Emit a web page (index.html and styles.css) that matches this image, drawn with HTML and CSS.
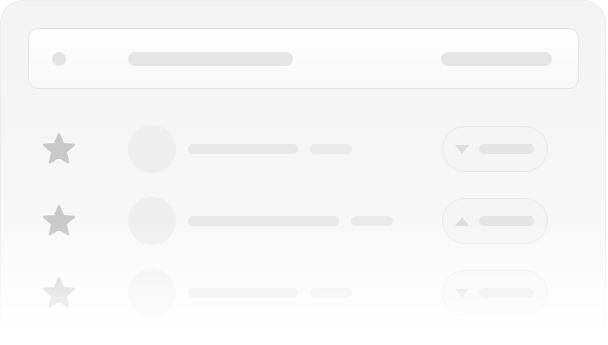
FILE: index.html
```html
<!DOCTYPE html>
<html>
<head>
<meta charset="utf-8">
<link rel="stylesheet" href="styles.css">
</head>
<body>
<div class="card">
  <div class="topbar">
    <span class="dot"></span>
    <span class="tbar tbar-a"></span>
    <span class="tbar tbar-b"></span>
  </div>
  <div class="rows">
    <div class="row">
      <div class="star-cell"><svg class="star" viewBox="0 0 24 24"><path d="M12 17.27L18.18 21l-1.64-7.03L22 9.24l-7.19-.61L12 2 9.19 8.63 2 9.24l5.46 4.73L5.82 21z"/></svg></div>
      <span class="avatar"></span>
      <span class="line line-short"></span>
      <span class="tag"></span>
      <div class="pill"><span class="tri tri-down"></span><span class="pbar"></span></div>
    </div>
    <div class="row">
      <div class="star-cell"><svg class="star" viewBox="0 0 24 24"><path d="M12 17.27L18.18 21l-1.64-7.03L22 9.24l-7.19-.61L12 2 9.19 8.63 2 9.24l5.46 4.73L5.82 21z"/></svg></div>
      <span class="avatar"></span>
      <span class="line line-long"></span>
      <span class="tag"></span>
      <div class="pill"><span class="tri tri-up"></span><span class="pbar"></span></div>
    </div>
    <div class="row">
      <div class="star-cell"><svg class="star" viewBox="0 0 24 24"><path d="M12 17.27L18.18 21l-1.64-7.03L22 9.24l-7.19-.61L12 2 9.19 8.63 2 9.24l5.46 4.73L5.82 21z"/></svg></div>
      <span class="avatar"></span>
      <span class="line line-short"></span>
      <span class="tag"></span>
      <div class="pill"><span class="tri tri-down"></span><span class="pbar"></span></div>
    </div>
  </div>
</div>
</body>
</html>
```
FILE: styles.css
```css
html, body {
  margin: 0;
  padding: 0;
  background: #ffffff;
  font-family: "Liberation Sans", Arial, sans-serif;
}
.card {
  box-sizing: border-box;
  width: 606px;
  height: 346px;
  padding: 27px 26px 0 27px;
  border: 1px solid #ececec;
  border-radius: 22px;
  background: linear-gradient(180deg, #f3f3f3 0%, #f7f7f7 60%, #fbfbfb 100%);
  -webkit-mask-image: linear-gradient(180deg, #000 0px, #000 222px, rgba(0,0,0,0.02) 342px);
  mask-image: linear-gradient(180deg, #000 0px, #000 222px, rgba(0,0,0,0.02) 342px);
}
.topbar {
  box-sizing: border-box;
  height: 61px;
  display: flex;
  align-items: center;
  padding: 0 26px 0 23px;
  border: 1px solid #e4e4e4;
  border-radius: 10px;
  background: linear-gradient(180deg, #ffffff 0%, #f7f7f7 100%);
}
.dot {
  width: 14px;
  height: 14px;
  border-radius: 50%;
  background: #e3e3e3;
}
.tbar {
  height: 14px;
  border-radius: 7px;
  background: #e5e5e5;
}
.tbar-a {
  width: 165px;
  margin-left: 62px;
}
.tbar-b {
  width: 111px;
  margin-left: auto;
}
.rows {
  margin-top: 24px;
  display: flex;
  flex-direction: column;
}
.row {
  height: 72px;
  display: flex;
  align-items: center;
  padding-right: 31px;
}
.star-cell {
  width: 62px;
  display: flex;
  justify-content: center;
}
.star {
  width: 36px;
  height: 36px;
  fill: #c9c9c9;
  stroke: #c9c9c9;
  stroke-width: 1.4;
  stroke-linejoin: round;
}
.avatar {
  width: 48px;
  height: 48px;
  border-radius: 50%;
  background: #eeeeee;
  margin-left: 38px;
}
.line {
  height: 10px;
  border-radius: 5px;
  background: #e8e8e8;
  margin-left: 12px;
}
.line-short { width: 110px; }
.line-long { width: 151px; }
.tag {
  width: 42px;
  height: 10px;
  border-radius: 5px;
  background: #ebebeb;
  margin-left: 12px;
}
.pill {
  box-sizing: border-box;
  width: 106px;
  height: 46px;
  margin-left: auto;
  border: 1px solid #e8e8e8;
  border-radius: 23px;
  background: #f5f5f5;
  display: flex;
  align-items: center;
  padding-left: 12px;
}
.tri {
  width: 0;
  height: 0;
  border-left: 7.5px solid transparent;
  border-right: 7.5px solid transparent;
}
.tri-down { border-top: 9px solid #dddddd; }
.tri-up { border-bottom: 9px solid #dddddd; }
.pbar {
  width: 55px;
  height: 10px;
  border-radius: 5px;
  background: #e4e4e4;
  margin-left: 10px;
}
```
